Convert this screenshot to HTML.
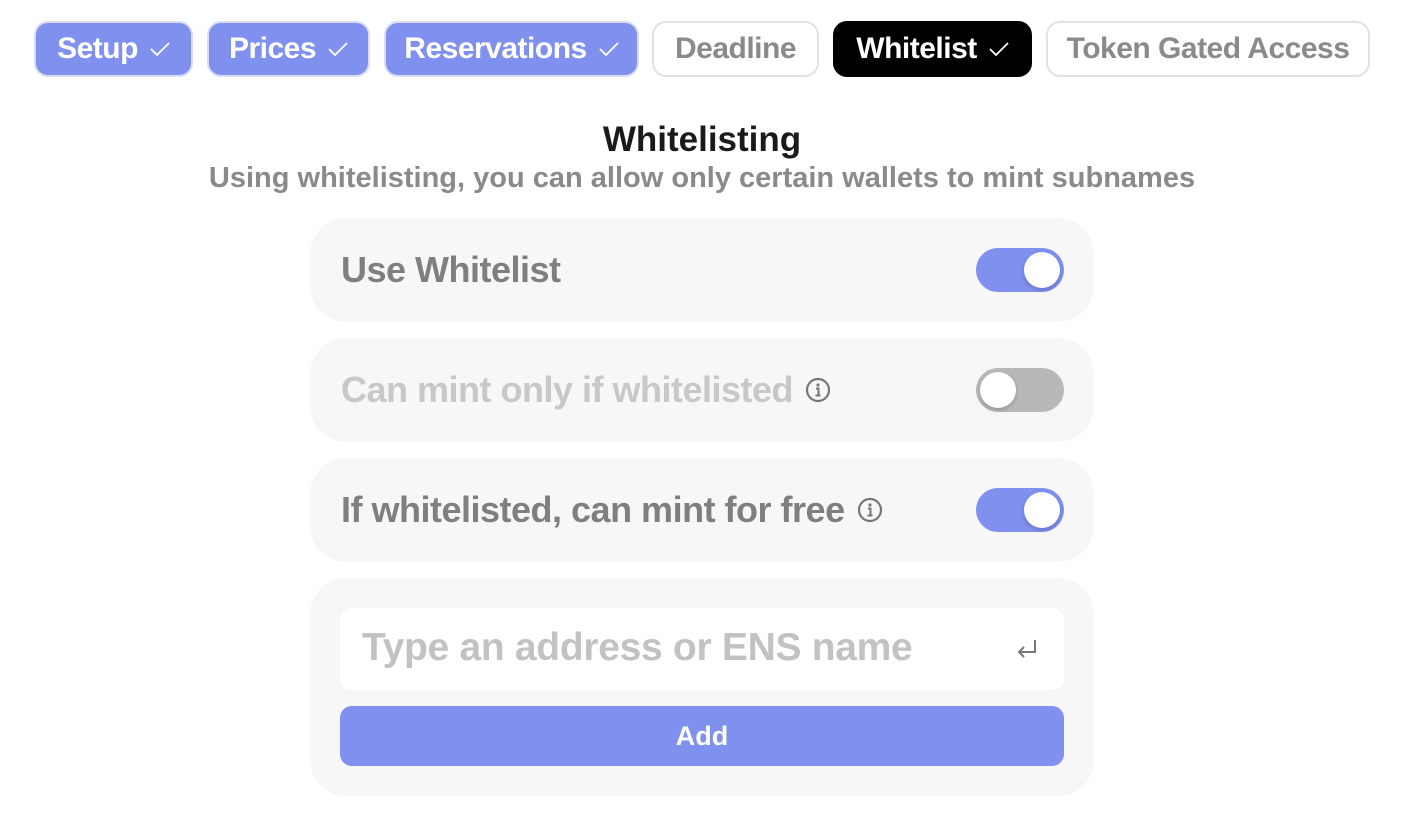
<!DOCTYPE html>
<html><head><style>
*{margin:0;padding:0;box-sizing:border-box}
body{width:1422px;height:828px;background:#fff;font-family:"Liberation Sans",sans-serif;position:relative;overflow:hidden}
.tab{position:absolute;top:21px;height:56px;border-radius:14px;border:2px solid #e2e2e2;font-weight:bold;font-size:30px;display:flex;align-items:center;justify-content:center;letter-spacing:-0.5px}
.done{background:#7f90ef;color:#fff;border-color:#d8dcf5}
.off{background:#fff;color:#8a8a8a}
.blk{background:#000;color:#fff;border-color:#000}
.ck{display:inline-block;margin-left:12px;width:20px;height:14px}
.card{position:absolute;left:310px;width:784px;background:#f7f7f7;border-radius:36px}
.lbl{position:absolute;left:31px;font-weight:bold;font-size:36px;letter-spacing:-0.5px;display:flex;align-items:center}
.tg{position:absolute;left:666px;width:88px;height:44px;border-radius:22px}
.tg i{position:absolute;top:4px;width:36px;height:36px;border-radius:50%;background:#fff;box-shadow:0 2px 4px rgba(0,0,0,.2)}
.info{margin-left:12px;width:26px;height:26px}
</style></head><body>
<svg width="0" height="0" style="position:absolute"><defs>
<symbol id="c" viewBox="0 0 20 14"><path d="M1 7l6 6L19 1" fill="none" stroke="currentColor" stroke-width="1.8"/></symbol>
<symbol id="inf" viewBox="0 0 26 26"><circle cx="13" cy="13" r="11" fill="none" stroke="#777" stroke-width="2.2"/><circle cx="13" cy="8" r="1.6" fill="#777"/><path d="M11 11.5h2.5v7M10.5 18.5h5" fill="none" stroke="#777" stroke-width="2"/></symbol>
</defs></svg>
<div class="tab done" style="left:34px;width:159px">Setup<svg class="ck"><use href="#c"/></svg></div>
<div class="tab done" style="left:207px;width:163px">Prices<svg class="ck"><use href="#c"/></svg></div>
<div class="tab done" style="left:384px;width:255px">Reservations<svg class="ck"><use href="#c"/></svg></div>
<div class="tab off" style="left:652px;width:167px">Deadline</div>
<div class="tab blk" style="left:833px;width:199px">Whitelist<svg class="ck"><use href="#c"/></svg></div>
<div class="tab off" style="left:1046px;width:324px">Token Gated Access</div>

<div style="position:absolute;top:120px;left:0;width:1404px;text-align:center;font-weight:bold;font-size:35px;color:#1a1a1a">Whitelisting</div>
<div style="position:absolute;top:162px;left:0;width:1404px;text-align:center;font-weight:bold;font-size:29px;color:#8a8a8a">Using whitelisting, you can allow only certain wallets to mint subnames</div>

<div class="card" style="top:218px;height:104px">
<div class="lbl" style="top:31px;color:#7f7f7f">Use Whitelist</div>
<div class="tg" style="top:30px;background:#7f90ef"><i style="left:48px"></i></div></div>
<div class="card" style="top:338px;height:104px">
<div class="lbl" style="top:31px;color:#c8c8c8">Can mint only if whitelisted<svg class="info"><use href="#inf"/></svg></div>
<div class="tg" style="top:30px;background:#b8b8b8"><i style="left:4px"></i></div></div>
<div class="card" style="top:458px;height:104px">
<div class="lbl" style="top:31px;color:#7f7f7f">If whitelisted, can mint for free<svg class="info"><use href="#inf"/></svg></div>
<div class="tg" style="top:30px;background:#7f90ef"><i style="left:48px"></i></div></div>
<div class="card" style="top:578px;height:218px">
<div style="position:absolute;left:30px;top:30px;width:724px;height:82px;background:#fff;border-radius:12px">
<div style="position:absolute;left:22px;top:18px;font-weight:bold;font-size:39px;color:#c2c2c2;letter-spacing:-0.3px">Type an address or ENS name</div>
<svg style="position:absolute;left:676px;top:30px" width="22" height="24" viewBox="0 0 22 24"><path d="M19 2v12H3M8 9l-5 5 5 5" fill="none" stroke="#777" stroke-width="2"/></svg>
</div>
<div style="position:absolute;left:30px;top:128px;width:724px;height:60px;background:#7f90ef;border-radius:12px;color:#fff;font-weight:bold;font-size:27px;display:flex;align-items:center;justify-content:center">Add</div>
</div>
</body></html>
